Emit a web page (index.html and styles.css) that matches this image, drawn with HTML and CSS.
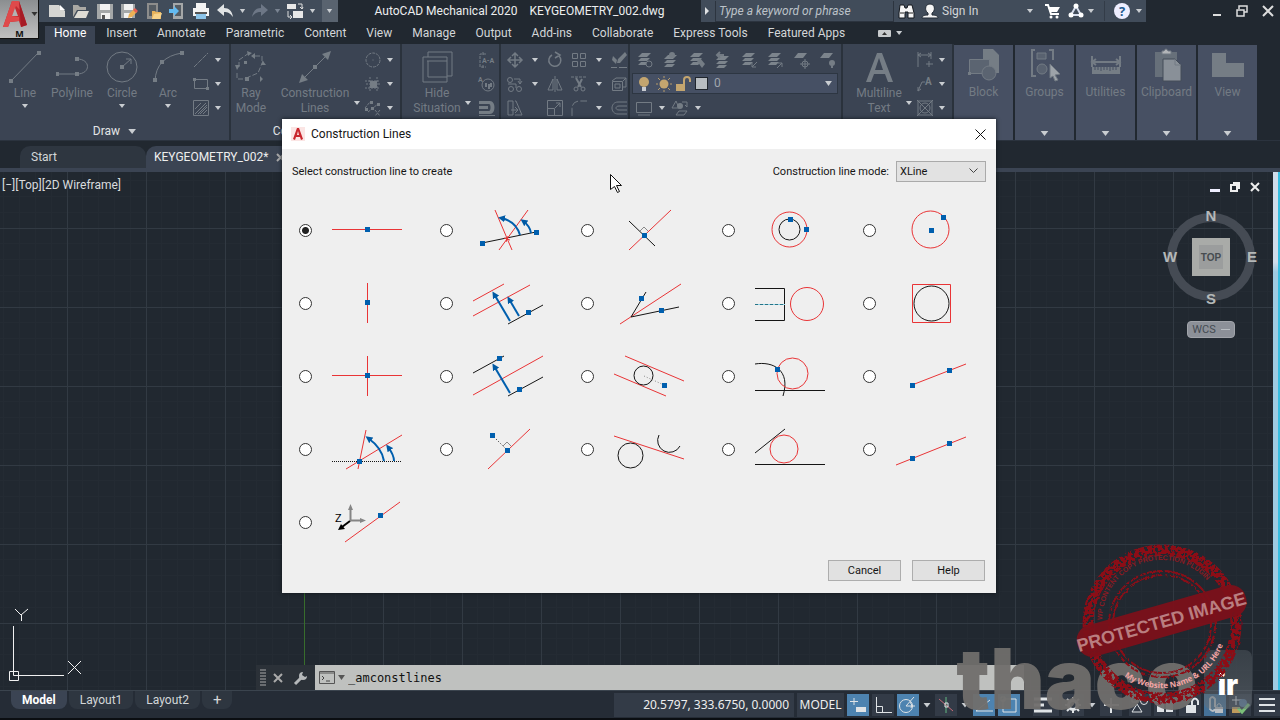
FILE: index.html
```html
<!DOCTYPE html>
<html lang="en">
<head>
<meta charset="utf-8">
<title>AutoCAD Mechanical 2020</title>
<link rel="stylesheet" href="styles.css">
</head>
<body>
<svg class="defs" aria-hidden="true">
  <symbol id="layers" viewBox="0 0 16 16"><path d="M5 1h9l-4 4H1zM4 6h9l-3 3H1zM4 10h8l-3 3H1z" fill="currentColor" stroke="none"/></symbol>
  <symbol id="sheet" viewBox="0 0 16 16"><path d="M5 1h9l-4 5H1z" fill="currentColor" stroke="none"/></symbol>
  <marker id="tip" viewBox="0 0 7 7" refX="4" refY="3.5" markerWidth="7" markerHeight="7" markerUnits="userSpaceOnUse" orient="auto"><path d="M0 0l7 3.500L0 7z" fill="#005aa5"/></marker>
</svg>
<div class="app">
  <header class="header">
    <button class="app-button" aria-label="Application menu">
      <svg width="25" height="28" viewBox="0 0 25 28"><path d="M0 27 9 1h7l8 24-6 2-2-6-9 1-2 5z" fill="#c22b31"/><path d="M9 1h7l3 11-6-6-4 10 7 1v4l-9 1-2 5H0z" fill="#df4a4b"/><path d="m12 8 3 8H9z" fill="#b3b3b3"/><path d="m16 1 8 24-6 2z" fill="#a61b25"/></svg>
      <i class="dd dark"></i><span>M</span>
    </button>
    <div class="titlebar">
      <div class="quick">
        <svg class="ic" viewBox="0 0 16 16"><path d="M0 2h10l6 6v6H0z" fill="#d5d5d2"/><path d="M11 2v5h5z" fill="#fff"/></svg>
        <svg class="ic" viewBox="0 0 16 16"><path d="M0 2h5l2 2h6v3H4l-4 7z" fill="#aaa9a4"/><path d="M5 8h11l-3 7H1z" fill="#dedcd5"/></svg>
        <svg class="ic" viewBox="0 0 16 16"><path d="M0 1h16v15H0z" fill="#a4a7a8"/><path d="M3 1h10v6H3zM4 10h9v6H4z" fill="#f1f1f1"/><path d="M5 12h3v4H5z" fill="#555"/></svg>
        <svg class="ic" viewBox="0 0 16 16"><path d="M0 1h14v14H0z" fill="#a4a7a8"/><path d="M3 1h9v6H3zM3 10h8v5H3z" fill="#f1f1f1"/><path d="m7 15 1-4 5-5 3 3-5 5z" fill="#ecb155"/><path d="m12 7 2-2 3 3-2 2z" fill="#e65f53"/></svg>
        <svg class="ic" viewBox="0 0 16 16"><path d="M2 0h11v16H2z" fill="#8d8d8c"/><path d="M4 2h7v11H4z" fill="#555c63"/><path d="M7 8h3l1 1h5v7H7z" fill="#e7b25b"/><path d="m9 11 8-1-2 6H7z" fill="#f7d28a"/></svg>
        <svg class="ic" viewBox="0 0 16 16"><path d="M4 0h10v16H4z" fill="#a5a7a8"/><path d="M6 2h6v11H6z" fill="#555c63"/><path d="M0 6h5V3l5 5-5 5v-3H0z" fill="#63baf1"/></svg>
        <svg class="ic" viewBox="0 0 16 16"><path d="M3 0h10v5H3zM0 5h16v8H0z" fill="#f3f3f3"/><path d="M2 9h12v2H2z" fill="#555"/><path d="M3 11h10v5H3z" fill="#8bc3e8"/></svg>
        <svg class="ic" viewBox="0 0 16 16"><path d="M0 7 7 1v4c5 0 8 3 9 9-3-4-5-5-9-5v4z" fill="#e1e4e5"/></svg>
        <i class="dd"></i>
        <svg class="ic" viewBox="0 0 16 16"><path d="M16 7 9 1v4C4 5 1 8 0 14c3-4 5-5 9-5v4z" fill="#6d7786"/></svg>
        <i class="dd dim"></i>
        <svg class="ic" viewBox="0 0 16 16"><path d="M0 1h9v5H0zM6 8h10v7H6z" fill="#e7e7e7"/><path d="M11 1h4v5m-2-2 2 2 1-2M1 8v6h4m-2-2 2 2-2 2" fill="none" stroke="#ddd"/></svg>
        <i class="dd"></i>
        <b class="customize"><i class="dd"></i></b>
      </div>
      <div class="app-title"><span>AutoCAD Mechanical 2020</span><span>KEYGEOMETRY_002.dwg</span></div>
      <div class="search">
        <i class="play"></i>
        <input aria-label="Search" placeholder="Type a keyword or phrase">
        <svg class="ic" viewBox="0 0 16 16"><path d="M2 2h4l1 3h2l1-3h4l2 8v5h-6V9H7v6H1v-5z" fill="#f5f5f5" stroke="#15191f"/><path d="M2 10h4M10 10h5" stroke="#222"/></svg>
        <svg class="ic person" viewBox="0 0 16 16"><path d="M8 1c6 0 5 8 2 9v2c4 0 6 1 6 3H0c0-2 2-3 6-3v-2C3 9 2 1 8 1z" fill="#f5f5f5" stroke="#222b35"/></svg>
        <button class="sign">Sign In</button><i class="dd"></i>
        <svg class="ic cart" viewBox="0 0 16 16"><path d="M1 2h3l3 9h8" fill="none" stroke="#fff" stroke-width="2"/><path d="M4 4h12l-3 5H6z" fill="#fff"/><circle cx="7" cy="14" r="1.500" fill="#fff"/><circle cx="13" cy="14" r="1.500" fill="#fff"/></svg>
        <svg class="ic" viewBox="0 0 16 16"><path d="M8 3 3 12h10z" fill="none" stroke="#d7deed" stroke-width="2"/><circle cx="8" cy="3" r="2.500" fill="#fff"/><circle cx="3" cy="12" r="2.500" fill="#fff"/><circle cx="13" cy="12" r="2.500" fill="#fff"/></svg>
        <i class="dd"></i><i class="sep"></i><button class="help" aria-label="Help">?</button><i class="dd"></i>
      </div>
      <div class="wincontrols">
        <svg width="10" height="12" viewBox="0 0 10 12"><path d="M1 10h8" stroke="#ddd" stroke-width="2"/></svg>
        <svg width="12" height="12" viewBox="0 0 12 12"><path d="M3 4V1h8v6H8M1 5h7v6H1z" fill="none" stroke="#ddd" stroke-width="1.500"/></svg>
        <svg width="12" height="12" viewBox="0 0 12 12"><path d="m1 1 10 10M11 1 1 11" stroke="#ddd" stroke-width="2"/></svg>
      </div>
    </div>
    <nav class="tabs">
      <button class="on">Home</button><button>Insert</button><button>Annotate</button><button>Parametric</button><button>Content</button><button>View</button><button>Manage</button><button>Output</button><button>Add-ins</button><button>Collaborate</button><button>Express Tools</button><button>Featured Apps</button>
      <span class="min"><svg width="13" height="7" viewBox="0 0 13 7"><rect width="13" height="7" rx="1" fill="#c8cbcd"/><path d="M4 5h5L6.500 2z" fill="#333"/></svg><i class="dd"></i></span>
    </nav>
  </header>

  <div class="ribbon">
    <section class="panel w-draw">
      <div class="tools">
        <button class="big b48"><svg viewBox="0 0 32 32"><path d="M2 30 30 1"/><path class="f" d="M0 28h4v4H0zM28 0h4v4h-4z"/></svg><span>Line</span><i class="dd"></i></button>
        <button class="big b46"><svg viewBox="0 0 32 32"><path d="M1 23h20c14 0 14-15 0-15"/><path class="f" d="M0 21h3v4H0zM19 21h4v4h-4zM19 6h4v4h-4z"/></svg><span>Polyline</span></button>
        <button class="big b54"><svg viewBox="0 0 32 32"><circle cx="16" cy="16" r="15"/><path d="m16 16 9-8m-5 0h5v5"/><path class="f" d="M14 14h4v4h-4z"/></svg><span>Circle</span><i class="dd"></i></button>
        <button class="big b38"><svg viewBox="0 0 32 32"><path d="M3 30Q4 6 30 2"/><path class="f" d="M1 27h4v4H1zM8 9h4v4H8zM28 0h4v4h-4z"/></svg><span>Arc</span><i class="dd"></i></button>
        <div class="pairs">
          <svg viewBox="0 0 16 16"><path d="M1 15 15 1" stroke-dasharray="5 1"/></svg><i class="dd"></i>
          <svg viewBox="0 0 16 16"><path d="M1.500 3.500h13v9h-13z"/><path class="f" d="M0 2h3v3H0zM13 11h3v3h-3z"/></svg><i class="dd"></i>
          <svg viewBox="0 0 16 16"><path d="M.5.5h15v15H.5zM2 9l6-6M2 14 13 3M7 14l7-7M4 7l4-4M5 14l9-9M10 14l4-4"/></svg><i class="dd"></i>
        </div>
      </div>
      <h2>Draw <i class="dd wide"></i></h2>
    </section>
    <section class="panel w-cons">
      <div class="tools">
        <button class="big b40"><svg viewBox="0 0 32 32"><path d="M4 16V9l10-7m14 8-5 12-14 6M20 5h7v6M2 22v6h6" stroke-dasharray="5 2"/><path class="f" d="m17 2-5-2 1 5zM2 19l-2-5h5zM28 10l3 4h-5zM20 2v6l-4-3zM28 28l-3-3v6zM9 10h3v3H9zM10 26h4v4h-4z"/></svg><span>Ray<br>Mode</span></button>
        <button class="big b78"><svg viewBox="0 0 32 32"><path d="M3 29 29 3"/><path class="f" d="m0 32 3-9 6 6zM32 0l-9 3 6 6zM14 14h4v4h-4z"/></svg><span>Construction<br>Lines</span></button><i class="dd low"></i>
        <div class="pairs">
          <svg viewBox="0 0 16 16"><circle cx="8" cy="8" r="7" stroke-dasharray="3 1"/><path d="M7.500 8h1"/></svg><i class="dd"></i>
          <svg viewBox="0 0 16 16"><path class="f" d="M5 5h7v7H5z"/><path d="M0 5h15M0 12h15M5 1v15M12 1v15M1 8h3M13 8h3" stroke-dasharray="2 1"/></svg><i class="dd"></i>
          <svg viewBox="0 0 16 16"><path d="m0 8 5-6M3 12l10-8M10 10l5 6M15 10l-5 6" stroke-dasharray="3 1"/><path class="f" d="M5 1h3v3H5zM12 3h3v3h-3zM0 8h3v3H0zM6 7h3v3H6z"/></svg><i class="dd"></i>
        </div>
      </div>
      <h2>Construction <i class="dd wide"></i></h2>
    </section>
    <section class="panel w-detail">
      <div class="tools">
        <button class="big b60"><svg viewBox="0 0 32 32"><path d="M2 6h24v25H2zM6 10h20M7 10v16h19M7 6V1h24v24h-5"/></svg><span>Hide<br>Situation</span></button><i class="dd low"></i>
        <div class="stack">
          <svg viewBox="0 0 16 16"><path d="M7 2H1v13h6M4 0v4M4 13v3" stroke-dasharray="3 1"/><text x="3" y="11">A-A</text></svg>
          <svg viewBox="0 0 16 16"><circle cx="9" cy="9" r="6"/><path d="M7 7v4M10 8v5M12 7v4" stroke-width="2"/><text x="-1" y="6">A</text></svg>
          <svg viewBox="0 0 16 16"><path class="f" d="M0 1h11c6 0 6 13 0 13H0v-3h10c2 0 2-7 0-7H0zM0 6h9v3H0zM0 15h16v1H0z"/></svg>
        </div>
      </div>
    </section>
    <section class="panel w-modify">
      <div class="modify">
        <svg viewBox="0 0 16 16"><path d="M8 1v14M1 8h14M5 4l3-3 3 3M5 12l3 3 3-3M4 5 1 8l3 3M12 5l3 3-3 3" stroke-width="1.500"/></svg><i class="dd"></i>
        <svg viewBox="0 0 16 16"><path d="M5 3a6 6 0 1 0 7 1M8 0l5 3-5 3" stroke-width="1.500"/></svg>
        <svg viewBox="0 0 16 16"><path d="M1.500 1.500h5v5h-5zM9.500 1.500h5v5h-5zM1.500 9.500h5v5h-5zM9.500 9.500h5v5h-5z"/></svg><i class="dd"></i>
        <svg viewBox="0 0 16 16"><path class="f" d="m7 7 7-7 2 3-7 8H6zM2 4l4 4-1 4-4-4zM0 15h6v1H0zM8 15h8v1H8z"/></svg>
        <svg viewBox="0 0 16 16"><circle cx="3" cy="4" r="2.500"/><circle cx="4" cy="13" r="2.500"/><circle cx="12" cy="13" r="2.500"/><path d="M7 3h6v5m-2-3 2 3 2-3M1 8h8v4"/></svg><i class="dd"></i>
        <svg viewBox="0 0 16 16"><path d="M6 3v11H1zM10 3v11h5zM8 0v16"/></svg>
        <svg viewBox="0 0 16 16"><path d="M0 1h16" stroke-dasharray="3 1"/><path d="m5 2 5 9M11 3 7 11" stroke-width="2"/><circle cx="5" cy="13" r="2"/><circle cx="12" cy="13" r="2"/></svg><i class="dd"></i>
        <svg viewBox="0 0 16 16"><path d="M1.500 5.500h10v9h-10zM5 2h10v9h-4M1 5l4-3M12 5l3-3M4 8h5v4H4z"/></svg>
        <svg viewBox="0 0 16 16"><path d="M1 1h5v14H1zM8 1h1l6 14H8M4 10h6M8 7l3 3-3 3"/></svg><i></i>
        <svg viewBox="0 0 16 16"><path d="M.5.500h15v15H.5zM.5 8.500h7v7M8 8l5-5M9 3h4v4"/></svg>
        <svg viewBox="0 0 16 16"><path d="M1 16V9q0-8 8-8h7" stroke-dasharray="8 2"/></svg><i class="dd"></i>
        <svg viewBox="0 0 16 16"><path d="M16 2H7C-1 2-1 14 7 14h9M16 6H8C4 6 4 10 8 10h8"/></svg>
      </div>
    </section>
    <section class="panel w-layers">
      <div class="row8">
        <svg viewBox="0 0 16 16"><use href="#layers"/><circle class="m" cx="12" cy="12" r="3"/></svg>
        <svg viewBox="0 0 16 16"><use href="#layers" y="2"/><circle class="f" cx="9" cy="3" r="3"/></svg>
        <svg viewBox="0 0 16 16"><use href="#layers"/><path class="f" d="m8 9 3-3 5 6-3 4z"/></svg>
        <svg viewBox="0 0 16 16"><use href="#layers" y="3"/><path d="M9 3H2m3-3L2 3l3 3" stroke-width="2"/></svg>
        <svg viewBox="0 0 16 16"><use href="#layers"/><path d="m16 10-5 5m0-4v4h4"/></svg>
        <svg viewBox="0 0 16 16"><use href="#layers"/><path d="m10 16 5-5m-4 0h4v4"/></svg>
        <svg viewBox="0 0 16 16"><use href="#sheet"/><circle cx="12" cy="12" r="3"/><path d="M12 7v10M7 12h10"/></svg>
        <svg viewBox="0 0 16 16"><use href="#sheet"/><circle class="f" cx="13" cy="11" r="3"/><path d="M13 13v3" stroke-width="2"/></svg>
      </div>
      <button class="layer-combo">
        <svg viewBox="0 0 16 16"><circle cx="7" cy="6" r="5" fill="#c3a56f" stroke="none"/><path d="M5 11h4v4H5z" fill="#c8cbd0" stroke="none"/></svg>
        <svg viewBox="0 0 16 16"><circle cx="8" cy="8" r="4.500" fill="#c3a56f" stroke="none"/><path d="M8 0v2M8 14v2M0 8h2M14 8h2M2 2l2 2M12 12l2 2M14 2l-2 2M4 12l-2 2" stroke="#b69b6b"/></svg>
        <svg viewBox="0 0 16 16"><path d="M1 8h9v7H1z" fill="#c3a56f" stroke="none"/><path d="M9 8V4q0-3 3-3t3 3v2" stroke="#c3a56f" stroke-width="2"/></svg>
        <i class="swatch"></i><span>0</span><i class="dd"></i>
      </button>
      <div class="row-last"><svg viewBox="0 0 16 16"><path d="M.5 2.500h15v10H.5zM2 15h12"/></svg><i class="dd"></i><svg viewBox="0 0 16 16"><path d="M0 8 4 1l3 7zM10 2h5v5m-2-2 2 2M7 11h8l-3 4H4z"/><circle class="f" cx="8" cy="6" r="3"/></svg><i class="dd"></i></div>
    </section>
    <section class="panel w-anno">
      <div class="tools">
        <button class="big b66"><svg viewBox="0 0 32 32"><path class="f" d="M3 31 14 2h5l11 29h-5l-3-8H11l-3 8zm9-12h8L16 7z"/></svg><span>Multiline<br>Text</span></button><i class="dd low"></i>
        <div class="pairs">
          <svg viewBox="0 0 16 16"><path d="M1 0v15M14 0v7M1 3h13M4 1 1 3l3 2M11 1l3 2-3 2M12 9v6M9 12h7"/></svg><i class="dd"></i>
          <svg viewBox="0 0 16 16"><path d="m1 15 4-9h3M1 15v-4m0 4 3-2"/><text class="lead" x="8" y="9">A</text></svg><i class="dd"></i>
          <svg viewBox="0 0 16 16"><path d="M1 1h14v14H1zM0 0l16 16M16 0 0 16"/><circle cx="8" cy="8" r="5"/></svg><i class="dd"></i>
        </div>
      </div>
    </section>
    <section class="chip"><svg viewBox="0 0 32 32"><path class="f" d="M15 0h10l6 6v18H15z"/><path d="M1.500 10.500h20v14h-20z" fill="#5b6471"/><circle cx="21" cy="24" r="7" fill="#5b6471"/><path class="f" d="M0 23h3v3H0z"/></svg><span>Block</span><i class="dd wide"></i></section>
    <section class="chip"><svg viewBox="0 0 32 32"><path d="M6 1H3v26h4M20 1h4v10" stroke-width="2"/><path d="M8 4h9v6H8z" fill="#596270"/><circle cx="13" cy="20" r="5" fill="#596270"/><path d="m21 15 10 10-5 1 3 5-3 1-2-5-3 2z" fill="#9da3a9"/></svg><span>Groups</span><i class="dd wide"></i></section>
    <section class="chip"><svg viewBox="0 0 32 32"><path d="M2 7v11M30 7v11M3 13h26M6 10l-4 3 4 3M26 10l4 3-4 3" stroke-width="2"/><path class="f" d="M2 18h28v7H2z"/><path d="M5 18v3M8 18v3M11 18v4M14 18v3M17 18v3M20 18v4M23 18v3M26 18v3" stroke="#475063"/></svg><span>Utilities</span><i class="dd wide"></i></section>
    <section class="chip"><svg viewBox="0 0 32 32"><path class="f" d="M4 3h22v25H4z" opacity=".7"/><path d="M11 5V2h2q2-4 4 0h3v3z" fill="#b2b5b8"/><path d="M12 10h12l6 6v16H12z" fill="#899098" stroke="#444d59"/><path d="M24 10v6h6"/></svg><span>Clipboard</span><i class="dd wide"></i></section>
    <section class="chip"><svg viewBox="0 0 32 32"><path class="f" d="M0 4h14v10h18v14H0z"/></svg><span>View</span><i class="dd wide"></i></section>
  </div>

  <div class="doc-tabs">
    <button>Start</button>
    <button class="on">KEYGEOMETRY_002* <svg width="9" height="9" viewBox="0 0 9 9"><path d="m1 1 7 7M8 1 1 8" stroke="#aaa" stroke-width="2"/></svg></button>
  </div>

  <main class="canvas">
    <p class="view-label">[−][Top][2D Wireframe]</p>
    <i class="axis-y"></i>
    <aside class="navigation">
      <div class="viewport-controls">
        <svg width="10" height="10" viewBox="0 0 10 10"><path d="M0 7h10v3H0z" fill="#eef"/></svg>
        <svg width="10" height="10" viewBox="0 0 10 10"><path d="M1 3h6v6H1zM3 1h6v6" fill="none" stroke="#eee" stroke-width="2"/></svg>
        <svg width="10" height="10" viewBox="0 0 10 10"><path d="m1 1 8 8M9 1 1 9" stroke="#eee" stroke-width="2"/></svg>
      </div>
      <svg class="cube" width="98" height="102" viewBox="0 0 98 102"><circle cx="49" cy="50" r="39.500" fill="none" stroke="#454b54" stroke-width="9"/><path d="M30 31h38v38H30z" fill="#a9aba8"/><path d="M37 38h24v24H37z" fill="#9b9d9d"/><g class="compass"><text x="49" y="14">N</text><text x="49" y="97">S</text><text x="8" y="55">W</text><text x="90" y="55">E</text></g><text class="top" x="49" y="54">TOP</text></svg>
      <button class="wcs">WCS <i></i></button>
    </aside>
    <i class="edge"></i>
    <svg class="ucs" width="86" height="74" viewBox="0 0 86 74"><path d="M13.500 18v49.500H64M9.500 63.500h9v9h-9zM15 1l6 6 7-6M21.500 7v6M68 53l13 13M81 53 68 66" fill="none" stroke="#f1f1f1"/></svg>
    <div class="command">
      <svg width="6" height="18" viewBox="0 0 6 18"><path d="M1 0v18M5 0v18M3 0v18" stroke="#aaa" stroke-dasharray="2 1"/></svg>
      <svg width="10" height="10" viewBox="0 0 10 10"><path d="m1 1 8 8M9 1 1 9" stroke="#aaa" stroke-width="2"/></svg>
      <svg width="14" height="14" viewBox="0 0 14 14"><path d="m1 13 7-7" stroke="#b5b8ba" stroke-width="3"/><path d="M9 1a4 4 0 1 0 4 4l-2 1-3-2z" fill="#b5b8ba"/></svg>
      <label><svg width="16" height="13" viewBox="0 0 16 13"><path d="M.5.500h15v12H.5zM1 2h14" fill="none" stroke="#555"/><path d="m3 5 2 2-2 2M7 10h4" fill="none" stroke="#444"/></svg><i class="dd gray"></i><input value="_amconstlines" aria-label="Command"></label>
    </div>
  </main>

  <footer class="status">
    <div class="layouts"><button class="on">Model</button><button>Layout1</button><button>Layout2</button><button class="plus">+</button></div>
    <div class="modes">
      <span class="coords">20.5797, 333.6750, 0.0000</span><button class="model">MODEL</button>
      <span class="tile hot"><svg viewBox="0 0 22 22"><path d="M7 4v7M3 7.500h8"/><path class="f" d="M9 13h10v5H9z"/></svg></span>
      <span class="tile"><svg viewBox="0 0 22 22"><path d="M4.500 3v15.500H20M4.500 12.500h6v6"/></svg></span>
      <span class="tile hot"><svg viewBox="0 0 22 22"><circle cx="9" cy="12" r="6.500"/><path d="M18 12H9l8-9M13 8q3 3 1 6"/></svg></span>
      <i class="dd"></i>
      <span class="tile"><svg viewBox="0 0 22 22"><path d="M11 3v16" stroke="#63b982"/><path d="m4 5 14 12" stroke="#c76c78"/><path d="M10 9h3v4h-3z"/></svg></span>
      <i class="dd"></i>
      <span class="tile hot"><svg viewBox="0 0 22 22"><path d="m3 17 14-11M3 17h17"/></svg></span>
      <span class="tile hot"><svg viewBox="0 0 22 22"><path d="M5 5h13v13H5zM3 3h4v4H3z"/></svg></span>
      <span class="tile lines"><svg viewBox="0 0 22 22"><path d="M1 5h18M1 11h10M1 17h18" stroke-width="3"/></svg></span>
      <span class="tile"><svg viewBox="0 0 22 22"><circle cx="11" cy="11" r="4.500" stroke-width="3"/><path d="M11 3v3M11 16v3M3 11h3M16 11h3M5 5l2 2M15 15l2 2M17 5l-2 2M7 15l-2 2" stroke-width="2"/></svg></span>
      <i class="dd"></i>
      <span class="tile"><svg viewBox="0 0 22 22"><path d="M11 4v15M4 11h15" stroke-width="2"/></svg></span>
      <span class="tile shapes"><svg viewBox="0 0 22 22"><path d="m3 18 5-8 5 8zM3 4h5v4H3z"/><circle cx="15" cy="7" r="3.500"/></svg></span>
      <span class="tile"><svg viewBox="0 0 22 22"><path class="f" d="M3 8h7v10H3zM12 8h7v10h-7z"/></svg></span>
      <span class="tile"><svg viewBox="0 0 22 22"><path class="f" d="M7 11h10v8H7z"/><path d="M13 11V7q3-5 6 0v4" stroke-width="2"/></svg></span>
      <span class="tile hot clip"><svg viewBox="0 0 22 22"><path d="M11 13V5q-3-4-5 0v10q3 4 5 0" stroke-width="2"/><path class="f" d="M11 13h8v6h-8z"/><path d="M13 13v-2q2-3 4 0v2"/></svg></span>
      <span class="tile"><svg viewBox="0 0 22 22"><path d="M3 6h10M7 2v9"/><circle cx="14" cy="9" r="4" fill="#58799a" stroke="none"/><path d="M3 13h8v6H3z" fill="#be9b5d" stroke="none"/><path d="m9 14 4 4 7-8" stroke="#7bbf79" stroke-width="3"/></svg></span>
      <span class="tile menu"><svg viewBox="0 0 22 22"><path d="M3 5h16M3 11h16M3 17h16" stroke-width="2"/></svg></span>
    </div>
  </footer>
</div>

<form class="dialog" role="dialog" aria-labelledby="dialog-title">
  <div class="dialog-title">
    <svg width="14" height="14" viewBox="0 0 14 14"><path d="M0 0h14v14H0z" fill="#fbe5e4"/><path d="M2 12 6 1h2l4 11-2 1-1-3H5l-1 3zm4-4h2L7 4z" fill="#c9272e"/></svg>
    <h1 id="dialog-title">Construction Lines</h1>
    <button type="button" aria-label="Close"><svg width="11" height="11" viewBox="0 0 11 11"><path d="m.5.500 10 10M10.500.500l-10 10" stroke="#111"/></svg></button>
  </div>
  <div class="dialog-head">
    <span>Select construction line to create</span>
    <label for="mode">Construction line mode:</label>
    <span class="select"><select id="mode"><option>XLine</option><option>Ray</option></select><svg width="9" height="6" viewBox="0 0 9 6"><path d="m.5.500 4 4 4-4" fill="none" stroke="#444"/></svg></span>
  </div>
  <div class="choices">
    <label><input type="radio" name="line" aria-label="Horizontal" checked><svg viewBox="0 0 70 40"><path class="r" d="M0 19.500h70"/><path class="p" d="M33 17h5v5h-5z"/></svg></label>
    <label><input type="radio" name="line" aria-label="Two points with angle"><svg viewBox="0 0 70 40"><path class="k" d="m9 33 54-11"/><path class="r" d="m22 0 17 40M55 0 26 40M31 28l6 2M35 26l-2 6"/><path class="a" d="M47 25Q43 11 28 8"/><path class="a" d="M58 23Q57 16 50 11"/><path class="p" d="M7 31h5v5H7zM61 20h5v5h-5z"/></svg></label>
    <label><input type="radio" name="line" aria-label="Perpendicular"><svg viewBox="0 0 70 40"><path class="r" d="M15 40 57 0"/><path class="k" d="m15 11 26 25"/><path class="g" d="m26 21 4-4 4 4"/><path class="p" d="M28 23h5v5h-5z"/></svg></label>
    <label><input type="radio" name="line" aria-label="Concentric circle"><svg viewBox="0 0 70 40"><circle class="r" cx="34.500" cy="19.500" r="17.500"/><circle class="k" cx="34.500" cy="19.500" r="10.500"/><path class="p" d="M33 7h5v5h-5zM49 17h5v5h-5z"/></svg></label>
    <label><input type="radio" name="line" aria-label="Circle"><svg viewBox="0 0 70 40"><circle class="r" cx="34.500" cy="19.500" r="18.500"/><path class="p" d="M45 5h5v5h-5zM33 18h5v5h-5z"/></svg></label>

    <label><input type="radio" name="line" aria-label="Vertical"><svg viewBox="0 0 70 40"><path class="r" d="M35.500 0v40"/><path class="p" d="M33 17h5v5h-5z"/></svg></label>
    <label><input type="radio" name="line" aria-label="Parallel by distance"><svg viewBox="0 0 70 40"><path class="r" d="M0 18 31 1M0 33 57 2"/><path class="k" d="m35 41 35-19"/><path class="a" d="M37 38 21 11"/><path class="a" d="M46 33 36 16"/><path class="p" d="M53 27h5v5h-5z"/></svg></label>
    <label><input type="radio" name="line" aria-label="Bisector"><svg viewBox="0 0 70 40"><path class="r" d="M6 41 67 1"/><path class="k" d="m32 9-15 25 48-10"/><path class="p" d="M25 13h5v5h-5zM45 25h5v5h-5z"/></svg></label>
    <label><input type="radio" name="line" aria-label="Shaft circle"><svg viewBox="0 0 70 40"><path class="k" d="M0 5.500h29.500v32H0"/><path d="M0 21.500h30" stroke="#8ed1e5"/><path class="k teal" d="M0 21.500h30" stroke-dasharray="3 2"/><circle class="r" cx="52" cy="21" r="16.500"/></svg></label>
    <label><input type="radio" name="line" aria-label="Square around circle"><svg viewBox="0 0 70 40"><path class="r" d="M16.500 1.500h38v38h-38z"/><circle class="k" cx="35.500" cy="20.500" r="17.500"/></svg></label>

    <label><input type="radio" name="line" aria-label="Cross"><svg viewBox="0 0 70 40"><path class="r" d="M0 19.500h70M35.500 0v40"/><path class="p" d="M33 17h5v5h-5z"/></svg></label>
    <label><input type="radio" name="line" aria-label="Half parallel"><svg viewBox="0 0 70 40"><path class="r" d="M0 39 70 0"/><path class="k" d="M0 17 31 0M35 40l35-19"/><path class="a" d="M37 37 21 10"/><path class="p" d="M24 0h5v5h-5zM44 31h5v5h-5z"/></svg></label>
    <label><input type="radio" name="line" aria-label="Tangent parallel"><svg viewBox="0 0 70 40"><path class="r" d="m11 0 59 25M0 18l52 22"/><circle class="k" cx="29.500" cy="19.500" r="9.500"/><path class="g" d="m30 20 20 9" stroke-dasharray="1 2"/><path class="p" d="M48 27h5v5h-5z"/></svg></label>
    <label><input type="radio" name="line" aria-label="Circle through point"><svg viewBox="0 0 70 40"><path class="k" d="M0 34.500h70M0 8C18 5 36 14 28 40"/><circle class="r" cx="37.500" cy="17.500" r="15.500"/><path class="p" d="M20 11h5v5h-5z"/></svg></label>
    <label><input type="radio" name="line" aria-label="Ray through points"><svg viewBox="0 0 70 40"><path class="r" d="m16 29 54-21"/><path class="p" d="M14 27h5v5h-5zM51 12h5v5h-5z"/></svg></label>

    <label><input type="radio" name="line" aria-label="By angle"><svg viewBox="0 0 70 40"><path class="k" d="M0 32.500h70" stroke-dasharray="1 1"/><path class="r" d="m14 40 56-34M26 40l8-39"/><path class="a" d="M52 32Q50 19 36 9"/><path class="a" d="M62 32Q62 26 56 18"/><path class="p" d="M25 30h5v5h-5z"/></svg></label>
    <label><input type="radio" name="line" aria-label="Normal through point"><svg viewBox="0 0 70 40"><path class="r" d="M15 40 57 0"/><path class="g" d="m30 17 4-4 4 4"/><path class="k" d="m19 6 14 14" stroke-dasharray="1 2"/><path class="p" d="M17 4h5v5h-5zM32 19h5v5h-5z"/></svg></label>
    <label><input type="radio" name="line" aria-label="Tangent to two circles"><svg viewBox="0 0 70 40"><path class="r" d="m0 7 70 23"/><circle class="k" cx="16.500" cy="26.500" r="12.500"/><path class="k" d="M45 6a11 11 0 1 0 21 11"/></svg></label>
    <label><input type="radio" name="line" aria-label="Tangent circle"><svg viewBox="0 0 70 40"><path class="k" d="M0 35.500h70M0 24 30 0"/><circle class="r" cx="29" cy="20" r="14"/></svg></label>
    <label><input type="radio" name="line" aria-label="Line through points"><svg viewBox="0 0 70 40"><path class="r" d="M0 36 70 8"/><path class="p" d="M14 27h5v5h-5zM51 12h5v5h-5z"/></svg></label>

    <label><input type="radio" name="line" aria-label="Z direction"><svg viewBox="0 0 70 40"><path class="r" d="M13 40 68 0"/><path d="M18.500 18.500V7M18 18.500h11" stroke="#858585" stroke-width="2" fill="none"/><path d="m16 8 2.500-6L21 8zM28 16l6 2.500-6 2.500z" fill="#858585"/><path d="m18 19-8 6" stroke="#000" stroke-width="2"/><path d="m6 28 3-6 4 5z"/><text x="3" y="20">Z</text><path class="p" d="M46 11h5v5h-5z"/></svg></label>
  </div>
  <div class="actions"><button type="button">Cancel</button><button type="button">Help</button></div>
</form>
<svg class="pointer" width="12" height="19" viewBox="0 0 12 19"><path d="M.5.500v15l4-3 3 6 2-1-3-6h5z" fill="#fff" stroke="#111"/></svg>

<div class="watermark"><span>thaco</span><b>ir</b></div>
<svg class="stamp" width="180" height="170" viewBox="-90 -85 180 170">
  <defs>
    <filter id="rough" x="-10%" y="-10%" width="120%" height="120%"><feTurbulence type="fractalNoise" baseFrequency=".3" numOctaves="2" seed="4" result="n"/><feColorMatrix in="n" values="0 0 0 0 0 0 0 0 0 0 0 0 0 0 0 0 0 0 -14 8.400" result="m"/><feDisplacementMap in="SourceGraphic" in2="n" scale="3" result="d"/><feComposite in="d" in2="m" operator="in"/></filter>
    <path id="upper" d="M-60 -4A60 60 0 0 1 60 -4"/><path id="lower" d="M-41 50A65 65 0 0 0 63 -15"/>
  </defs>
  <g filter="url(#rough)" fill="none" stroke="#8c0d18"><circle r="74" stroke-width="11"/><circle r="53" stroke-width="2"/><circle r="49" stroke-width="2"/></g>
  <text class="plugin"><textPath href="#upper">WP CONTENT COPY PROTECTION PLUGIN</textPath></text>
  <g transform="rotate(-16)"><rect x="-87" y="-19" width="175" height="32" rx="15" fill="#7c1019" fill-opacity=".94"/><text class="banner" x="0" y="4">PROTECTED IMAGE</text></g>
  <text class="site"><textPath href="#lower" startOffset="4">My Website Name &amp; URL Here</textPath></text>
</svg>
</body>
</html>
```
FILE: styles.css
```css
* { box-sizing: border-box; }
body { margin: 0; font: 12px/15px Roboto, "Noto Sans", sans-serif; color: #d3d6d8; background: #212830; overflow: hidden; }
button, input, select { font: inherit; color: inherit; border: 0; background: none; padding: 0; margin: 0; border-radius: 0; }
h1, h2, p { margin: 0; font-size: 12px; font-weight: 400; }
svg { flex: none; display: block; overflow: visible; }
.defs { position: absolute; width: 0; height: 0; }
.app { display: flex; flex-direction: column; height: 100vh; }

.dd { flex: none; width: 8px; height: 4px; background: #c9cdd1; clip-path: polygon(12% 0, 88% 0, 50% 100%); }
.dd.wide { width: 10px; height: 5px; }
.dd.dim { background: #7a8492; }
.dd.dark { background: #333; }
.dd.gray { width: 9px; height: 5px; background: #555; }
.ic { width: 16px; height: 16px; }

/* Header */
.header { display: grid; grid-template: 22px 22px / 39px 1fr; }
.app-button { grid-row: 1 / 3; height: 39px; display: grid; grid-template: 28px 10px / 30px 9px; align-items: center; justify-items: center; background: linear-gradient(#8b8e90, #c0c0c0); border-right: 1px solid #111; border-bottom: 1px solid #111; }
.app-button span { grid-column: 1 / 3; color: #111; font: bold 9px/9px "Open Sans", sans-serif; }
.titlebar { display: flex; align-items: stretch; }
.quick { display: flex; align-items: center; gap: 6px; padding-left: 10px; background: #414c5a; }
.quick .ic + .ic { margin-left: 2px; }
.quick .dd { width: 7px; }
.customize { align-self: stretch; display: flex; align-items: center; width: 16px; padding-left: 4px; background: #59636f; }
.app-title { flex: 1; display: flex; justify-content: center; align-items: center; gap: 12px; white-space: nowrap; color: #eceeef; }
.search { display: flex; align-items: center; background: #414c5a; padding-right: 3px; }
.search input { width: 179px; height: 21px; padding: 0 3px; margin: 0 4px 0 6px; border: 1px solid #2c343f; border-top: 0; font-style: italic; }
.search input::placeholder { color: #bcc2c8; opacity: 1; }
.play { width: 4px; height: 8px; margin-left: 4px; background: #e0e2e4; clip-path: polygon(0 0, 100% 50%, 0 100%); }
.person { margin: 0 4px 0 8px; }
.sign { width: 84px; text-align: left; }
.cart { margin: 0 8px 0 10px; }
.search .ic + .dd { margin-left: 3px; }
.sep { width: 1px; height: 20px; margin: 0 9px 0 9px; background: #333c48; }
.help { width: 16px; height: 16px; margin-right: 5px; border-radius: 50%; background: #eef; color: #235a8f; font: bold 13px/16px "Open Sans", sans-serif; }
.wincontrols { display: flex; align-items: center; gap: 14px; margin: 0 6px 0 66px; }
.tabs { display: flex; gap: 2px; padding-left: 6px; white-space: nowrap; }
.tabs button { padding: 0 9px; }
.tabs .on { margin-top: 4px; padding-bottom: 4px; background: #3b4453; color: #fff; }
.tabs .min { display: flex; align-items: center; gap: 4px; margin-left: 22px; }

/* Ribbon */
.ribbon { display: flex; height: 97px; color: #737b84; overflow: hidden; border-bottom: 1px solid #2b333e; }
.ribbon svg { width: 16px; height: 16px; fill: none; stroke: #737b84; color: #7c848c; }
.ribbon .f, .ribbon text { fill: #757d85; stroke: none; }
.ribbon .m { fill: #3b4453; }
.ribbon text { font-size: 7px; font-weight: 700; }
.ribbon .lead { font-size: 10px; }
.panel { flex: none; display: flex; flex-direction: column; background: #3b4453; border-right: 2px solid #2a323c; padding-top: 4px; }
.w-draw { width: 231px; padding-left: 1px; }
.w-cons { width: 171px; }
.w-detail { width: 99px; }
.w-modify { width: 129px; }
.w-layers { width: 213px; }
.w-anno { width: 111px; }
.tools { display: flex; height: 76px; }
.big { flex: none; display: flex; flex-direction: column; align-items: center; padding-top: 3px; }
.big svg { width: 32px; height: 32px; margin-bottom: 3px; }
.big .dd { margin-top: 3px; }
.b38 { width: 38px; margin-right: 6px; }
.b40 { width: 40px; }
.b46 { width: 46px; }
.b48 { width: 48px; }
.b54 { width: 54px; }
.b60 { width: 60px; margin-left: 5px; }
.b66 { width: 66px; margin-left: 3px; }
.b78 { width: 82px; margin-left: 3px; }
.low { margin-top: 53px; margin-left: -3px; }
.w-anno .low { margin-left: -7px; }
.pairs { display: grid; grid-template: repeat(3, 24px) / 16px 8px; column-gap: 5px; align-items: center; margin-left: auto; padding-right: 6px; }
.w-draw .pairs { margin-left: 0; }
.stack { display: grid; grid-template-rows: repeat(3, 24px); align-items: center; margin-left: auto; padding-right: 4px; }
.panel h2 { display: flex; justify-content: center; align-items: center; gap: 7px; color: #e2e4e6; height: 15px; }
.modify { display: grid; grid-template: repeat(3, 24px) / 16px 8px 16px 16px 8px 16px; column-gap: 8px; align-items: center; padding-left: 6px; }
.row8 { display: flex; align-items: center; gap: 10px; height: 24px; padding-left: 7px; }
.layer-combo { display: flex; align-items: center; height: 21px; margin: 1px 3px 2px 2px; padding: 0 4px; gap: 3px; background: #465064; border: 1px solid #2d3642; color: #a0a6ad; }
.swatch { width: 13px; height: 13px; margin: 0 3px 0 1px; background: #b8bdc2; border: 1px solid #20262e; }
.layer-combo .dd { margin-left: auto; width: 9px; height: 5px; }
.row-last { display: flex; align-items: center; gap: 6px; height: 24px; padding-left: 6px; }
.chip { flex: none; display: flex; flex-direction: column; align-items: center; width: 59px; margin: 1px 2px 0 0; padding: 4px 0; background: #475063; }
.chip svg { width: 32px; height: 32px; margin-bottom: 4px; }
.chip .dd { margin-top: auto; }
.chip:nth-last-child(5) .dd { visibility: hidden; }

/* Document tabs */
.doc-tabs { display: flex; height: 31px; padding: 5px 0 0 20px; border-bottom: 4px solid #3b4453; }
.doc-tabs button { display: flex; align-items: center; gap: 8px; width: 126px; padding-left: 11px; background: #2e3640; border-radius: 10px 10px 0 0; }
.doc-tabs .on { width: 146px; padding-left: 8px; background: #3b4453; color: #eee; }

/* Drawing area */
.canvas { position: relative; flex: 1; background-color: #212830;
  background-image: linear-gradient(90deg, #323a43 1px, transparent 1px), linear-gradient(#323a43 1px, transparent 1px), repeating-linear-gradient(90deg, transparent 0 15px, #242b33 15px 16px), repeating-linear-gradient(transparent 0 15px, #242b33 15px 16px);
  background-size: 79px 79px; background-position: 67px 56px; }
.view-label { padding: 6px 2px; color: #d9dcde; }
.axis-y { position: absolute; left: 304px; bottom: 0; width: 1px; height: 100px; background: #386d2c; }
.edge { position: absolute; right: 0; top: 0; bottom: 0; width: 7px; background: linear-gradient(#cfdcea 0 90px, #9ecbe2 100px); border-right: 2px solid #37bde0; }
.navigation { position: absolute; right: 20px; top: 10px; display: flex; flex-direction: column; align-items: center; }
.viewport-controls { align-self: flex-end; display: flex; gap: 10px; }
.cube { margin-top: 15px; }
.cube text { text-anchor: middle; font-family: "Liberation Sans", sans-serif; font-weight: 700; }
.compass { font-size: 15px; fill: #b4b8b8; }
.top { font-size: 10px; fill: #474c50; }
.wcs { display: flex; align-items: center; justify-content: center; gap: 5px; width: 48px; height: 17px; margin-top: 12px; border-radius: 4px; background: #8c9098; color: #454b52; border: 1px solid #a1a4aa; font-size: 11px; }
.wcs i { width: 9px; height: 1px; background: #b9bdc2; }
.ucs { position: absolute; left: 0; bottom: 8px; }
.command { position: absolute; left: 20%; width: 60%; bottom: 0; display: flex; align-items: center; height: 25px; padding-left: 4px; gap: 7px; background: #2b3138; }
.command svg:nth-child(3) { margin-left: 4px; }
.command label { flex: 1; display: flex; align-items: center; gap: 2px; height: 25px; padding: 0 4px; background: #bfc1bf; }
.command input { flex: 1; color: #111; font: 12px/16px "DejaVu Sans Mono", monospace; }

/* Status bar */
.status { display: flex; height: 30px; background: #252c36; border-top: 1px solid #3b444e; border-bottom: 2px solid #0b0e12; }
.layouts { display: flex; align-items: flex-start; gap: 2px; padding-left: 11px; }
.layouts button { height: 18px; padding: 0 11px; background: #2e3640; border-radius: 0 0 8px 8px; }
.layouts .on { font-weight: 700; background: #3b4453; color: #fff; }
.layouts .plus { font-size: 15px; }
.modes { display: flex; align-items: center; gap: 3px; margin-left: auto; padding-top: 1px; }
.coords, .model { height: 24px; line-height: 24px; background: #333b47; color: #eee; text-align: right; white-space: nowrap; font-family: "Noto Sans", sans-serif; }
.coords { width: 180px; padding-right: 5px; }
.model { width: 47px; text-align: center; }
.tile { width: 22px; height: 22px; background: #333b47; }
.tile svg { width: 22px; height: 22px; fill: none; stroke: #dfe3e6; }
.tile .f { fill: #dfe3e6; stroke: none; }
.tile.hot { background: #4d83b0; }
.clip { opacity: .8; }
.modes .dd { width: 10px; height: 5px; }
.lines { width: 26px; margin-left: 10px; }
.shapes { margin-left: 4px; }
.menu { width: 26px; padding-left: 2px; }

/* Dialog */
.dialog { position: absolute; left: 282px; top: 119px; width: 714px; background: #efefef; color: #151515; box-shadow: 0 0 4px #10151a; }
.dialog-title { display: flex; align-items: center; height: 30px; padding: 0 10px 0 9px; gap: 6px; background: #fff; }
.dialog-title button { margin-left: auto; }
.dialog-head { display: flex; align-items: center; padding: 11px 10px 0; gap: 7px; height: 33px; font-size: 11px; }
.dialog-head label { margin-left: auto; }
.select { display: grid; grid-template-columns: 1fr 17px; align-items: center; width: 90px; }
.select select { grid-area: 1 / 1 / 2 / 3; height: 21px; padding: 0 3px; appearance: none; background: #e2e2e2; border: 1px solid #aaa; }
.select svg { grid-area: 1 / 2; pointer-events: none; }
.choices { display: grid; grid-template-columns: repeat(5, 103px); gap: 33px 38px; padding: 28px 17px 0; }
.choices label { display: flex; align-items: center; gap: 20px; height: 40px; }
.choices input { flex: none; appearance: none; width: 13px; height: 13px; border: 1px solid #333; border-radius: 50%; background: #fff; }
.choices input:checked { background: radial-gradient(circle, #222 3px, #fff 4px); }
.choices svg { width: 70px; height: 40px; }
.choices text { font-size: 11px; }
.r, .k, .g, .a { fill: none; stroke: #e93436; }
.k { stroke: #151515; }
.teal { stroke: #267385; }
.g { stroke: #888; }
.a { stroke: #005fae; stroke-width: 2; marker-end: url(#tip); }
.p { fill: #005fae; }
.actions { display: flex; justify-content: flex-end; gap: 11px; padding: 18px 11px 12px; font-size: 11px; }
.actions button { width: 73px; height: 21px; background: #e1e1e1; border: 1px solid #adadad; }
.pointer { position: absolute; left: 610px; top: 174px; }

/* Overlays */
.watermark { position: absolute; right: 28px; bottom: 11px; display: flex; align-items: flex-end; gap: 6px; pointer-events: none; }
.watermark span { color: #706e6c; opacity: .95; font: 900 84px/60px Inter, sans-serif; }
.watermark b { width: 48px; height: 59px; padding-top: 19px; border-radius: 7px; background: linear-gradient(#48505799, #69717888); color: #fff; text-align: center; font: 900 28px/32px Inter, sans-serif; }
.stamp { position: absolute; right: 28px; bottom: 11px; pointer-events: none; }
.plugin { font: bold 7px "Liberation Sans", sans-serif; fill: #8c1a22; }
.banner { font: bold 18px "Liberation Sans", sans-serif; fill: #b97e80; text-anchor: middle; }
.site { font: bold 8px "Open Sans", sans-serif; fill: #f3a5a5; }
```
